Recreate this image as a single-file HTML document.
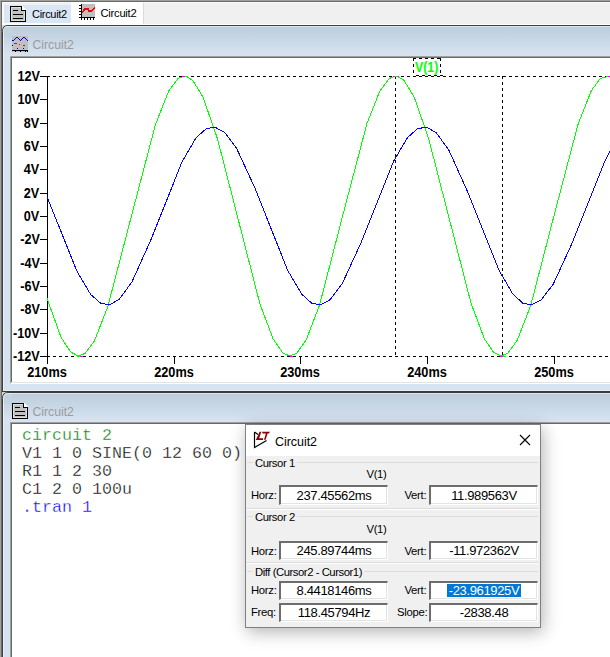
<!DOCTYPE html>
<html><head><meta charset="utf-8">
<style>
*{margin:0;padding:0;box-sizing:border-box}
html,body{width:610px;height:657px;overflow:hidden;background:#f0f0f0;font-family:"Liberation Sans",sans-serif}
.a{position:absolute}
.t{position:absolute;white-space:nowrap;line-height:1}
svg{position:absolute;left:0;top:0}
.mono{font-family:"Liberation Mono",monospace;font-size:16.67px;line-height:18px;position:absolute;white-space:pre;-webkit-text-stroke:0.35px #fff}
.yl{right:570.4px;font-weight:bold;font-size:14px;transform:scaleX(0.9);transform-origin:100% 0}
.xl{width:100px;text-align:center;font-weight:bold;font-size:14px;transform:scaleX(0.91);transform-origin:50% 0}
.dlg{font-size:12px;color:#000}
.ebox{position:absolute;background:#fff;border-top:2px solid #6d6d6d;border-left:2px solid #6d6d6d;border-bottom:1px solid #fff;border-right:1px solid #fff;text-align:center;font-size:13px;letter-spacing:-0.35px;line-height:17px;padding-top:0px}
.eb2{line-height:15px}
.lb{font-size:11.3px;color:#000;letter-spacing:-0.45px}
.sel{background:#0078d7;color:#fff;display:inline-block;line-height:13px;height:13px;padding:0 2px;vertical-align:top;margin-top:1px}
.ebox:after{content:"";position:absolute;left:0;right:0;bottom:0;height:1px;background:#e3e3e3}
.ebox:before{content:"";position:absolute;top:0;right:0;bottom:0;width:1px;background:#e3e3e3}
</style></head><body>
<!-- MDI frame edges -->
<div class="a" style="left:0;top:0;width:610px;height:1px;background:#a0a0a0"></div>
<div class="a" style="left:0;top:1px;width:610px;height:1px;background:#6a6a6a"></div>
<div class="a" style="left:0;top:0;width:1px;height:657px;background:#a0a0a0"></div>
<div class="a" style="left:1px;top:1px;width:1px;height:656px;background:#6a6a6a"></div>
<!-- tab strip -->
<div class="a" style="left:2px;top:2px;width:608px;height:1px;background:#fafafa"></div>
<div class="a" style="left:2px;top:24px;width:608px;height:1px;background:#fff"></div>
<div class="a" style="left:2px;top:3px;width:2px;height:21px;background:#f8f8f8"></div>
<div class="a" style="left:4px;top:5px;width:67px;height:18px;background:#d9e7f5"></div>
<div class="a" style="left:2px;top:23px;width:70px;height:1px;background:#fcfcfc"></div>
<div class="a" style="left:71px;top:2px;width:72px;height:22px;background:#fff"></div>
<div class="a" style="left:143px;top:3px;width:1px;height:21px;background:#dadada"></div>
<div class="t" style="left:32px;top:9px;font-size:11px;letter-spacing:-0.3px;color:#000">Circuit2</div>
<div class="t" style="left:100.5px;top:7.5px;font-size:11.2px;letter-spacing:-0.25px;color:#000">Circuit2</div>

<!-- window 1 frame -->
<div class="a" style="left:2px;top:25px;width:4px;height:4px;background:#d8d4c4"></div>
<div class="a" style="left:2px;top:392px;width:4px;height:4px;background:#d8d4c4"></div>
<div class="a" style="left:2px;top:25px;width:608px;height:367px;background:#d6e3f0;border-top:1px solid #404040;border-left:1px solid #404040;border-bottom:1px solid #3c3c3c"></div>
<div class="a" style="left:6px;top:26px;width:604px;height:1px;background:#dde6f0"></div>
<div class="a" style="left:3px;top:27px;width:607px;height:29px;background:linear-gradient(#bccddc,#d8e4f0)"></div>
<div class="a" style="left:3px;top:30px;width:1px;height:360px;background:#e8f0f8"></div>
<svg width="12" height="12" style="position:absolute;left:0;top:25px" viewBox="0 0 12 12"><rect x="2" y="0" width="6" height="6" fill="#d8d4c4"/><path d="M2,12 V6 Q2,0 8,0 H12 V12 Z" fill="#c3d2e0"/><path d="M2.5,12 V6.5 Q2.5,0.5 8,0.5 H12" fill="none" stroke="#3c3c3c" stroke-width="1"/><path d="M3.5,12 V6.5 Q3.5,1.5 8,1.5 H12" fill="none" stroke="#e4ecf4" stroke-width="1"/></svg>
<div class="a" style="left:3px;top:390px;width:607px;height:1px;background:#e6eef8"></div>
<div class="t" style="left:32.5px;top:39px;font-size:12.2px;color:#9a9aa0">Circuit2</div>
<!-- plot pane -->
<div class="a" style="left:10px;top:56px;width:600px;height:328px;background:#fff;border-top:1px solid #a0a0a0;border-left:1px solid #a0a0a0;border-bottom:1px solid #fff"></div>
<div class="a" style="left:11px;top:57px;width:599px;height:1px;background:#696969"></div>
<div class="a" style="left:11px;top:57px;width:1px;height:325px;background:#696969"></div>
<div class="a" style="left:11px;top:382px;width:599px;height:1px;background:#e3e3e3"></div>

<!-- window 2 frame -->
<div class="a" style="left:2px;top:392px;width:608px;height:265px;background:#d6e3f0;border-top:1px solid #3c3c3c;border-left:1px solid #404040"></div>
<div class="a" style="left:6px;top:393px;width:604px;height:1px;background:#dde6f0"></div>
<div class="a" style="left:3px;top:394px;width:607px;height:28px;background:linear-gradient(#bccddc,#d8e4f0)"></div>
<div class="a" style="left:3px;top:397px;width:1px;height:260px;background:#e8f0f8"></div>
<svg width="12" height="12" style="position:absolute;left:0;top:392px" viewBox="0 0 12 12"><rect x="2" y="0" width="6" height="6" fill="#d8d4c4"/><path d="M2,12 V6 Q2,0 8,0 H12 V12 Z" fill="#c3d2e0"/><path d="M2.5,12 V6.5 Q2.5,0.5 8,0.5 H12" fill="none" stroke="#3c3c3c" stroke-width="1"/><path d="M3.5,12 V6.5 Q3.5,1.5 8,1.5 H12" fill="none" stroke="#e4ecf4" stroke-width="1"/></svg>
<div class="t" style="left:32.5px;top:406px;font-size:12.2px;color:#9a9aa0">Circuit2</div>
<div class="a" style="left:10px;top:422px;width:600px;height:235px;background:#fff;border-top:1px solid #a0a0a0;border-left:1px solid #a0a0a0"></div>
<div class="a" style="left:11px;top:423px;width:599px;height:1px;background:#696969"></div>
<div class="a" style="left:11px;top:423px;width:1px;height:234px;background:#696969"></div>

<div class="mono" style="left:22px;top:427px"><span style="color:#008000">circuit 2</span>
V1 1 0 SINE(0 12 60 0)
R1 1 2 30
C1 2 0 100u
<span style="color:#0000ff">.tran 1</span></div>

<svg width="610" height="657" viewBox="0 0 610 657" shape-rendering="crispEdges">
<rect x="40" y="76" width="7" height="1" fill="#000"/><rect x="40" y="99" width="7" height="1" fill="#000"/><rect x="40" y="123" width="7" height="1" fill="#000"/><rect x="40" y="146" width="7" height="1" fill="#000"/><rect x="40" y="169" width="7" height="1" fill="#000"/><rect x="40" y="193" width="7" height="1" fill="#000"/><rect x="40" y="216" width="7" height="1" fill="#000"/><rect x="40" y="239" width="7" height="1" fill="#000"/><rect x="40" y="263" width="7" height="1" fill="#000"/><rect x="40" y="286" width="7" height="1" fill="#000"/><rect x="40" y="309" width="7" height="1" fill="#000"/><rect x="40" y="333" width="7" height="1" fill="#000"/><rect x="40" y="356" width="7" height="1" fill="#000"/><rect x="47" y="76" width="1" height="288" fill="#000"/><rect x="47" y="356" width="1" height="8" fill="#000"/><rect x="174" y="356" width="1" height="8" fill="#000"/><rect x="300" y="356" width="1" height="8" fill="#000"/><rect x="427" y="356" width="1" height="8" fill="#000"/><rect x="554" y="356" width="1" height="8" fill="#000"/><rect x="47" y="76" width="3" height="1" fill="#000"/><rect x="47" y="356" width="3" height="1" fill="#000"/><rect x="53" y="76" width="3" height="1" fill="#000"/><rect x="53" y="356" width="3" height="1" fill="#000"/><rect x="59" y="76" width="3" height="1" fill="#000"/><rect x="59" y="356" width="3" height="1" fill="#000"/><rect x="65" y="76" width="3" height="1" fill="#000"/><rect x="65" y="356" width="3" height="1" fill="#000"/><rect x="71" y="76" width="3" height="1" fill="#000"/><rect x="71" y="356" width="3" height="1" fill="#000"/><rect x="77" y="76" width="3" height="1" fill="#000"/><rect x="77" y="356" width="3" height="1" fill="#000"/><rect x="83" y="76" width="3" height="1" fill="#000"/><rect x="83" y="356" width="3" height="1" fill="#000"/><rect x="89" y="76" width="3" height="1" fill="#000"/><rect x="89" y="356" width="3" height="1" fill="#000"/><rect x="95" y="76" width="3" height="1" fill="#000"/><rect x="95" y="356" width="3" height="1" fill="#000"/><rect x="101" y="76" width="3" height="1" fill="#000"/><rect x="101" y="356" width="3" height="1" fill="#000"/><rect x="107" y="76" width="3" height="1" fill="#000"/><rect x="107" y="356" width="3" height="1" fill="#000"/><rect x="113" y="76" width="3" height="1" fill="#000"/><rect x="113" y="356" width="3" height="1" fill="#000"/><rect x="119" y="76" width="3" height="1" fill="#000"/><rect x="119" y="356" width="3" height="1" fill="#000"/><rect x="125" y="76" width="3" height="1" fill="#000"/><rect x="125" y="356" width="3" height="1" fill="#000"/><rect x="131" y="76" width="3" height="1" fill="#000"/><rect x="131" y="356" width="3" height="1" fill="#000"/><rect x="137" y="76" width="3" height="1" fill="#000"/><rect x="137" y="356" width="3" height="1" fill="#000"/><rect x="143" y="76" width="3" height="1" fill="#000"/><rect x="143" y="356" width="3" height="1" fill="#000"/><rect x="149" y="76" width="3" height="1" fill="#000"/><rect x="149" y="356" width="3" height="1" fill="#000"/><rect x="155" y="76" width="3" height="1" fill="#000"/><rect x="155" y="356" width="3" height="1" fill="#000"/><rect x="161" y="76" width="3" height="1" fill="#000"/><rect x="161" y="356" width="3" height="1" fill="#000"/><rect x="167" y="76" width="3" height="1" fill="#000"/><rect x="167" y="356" width="3" height="1" fill="#000"/><rect x="173" y="76" width="3" height="1" fill="#000"/><rect x="173" y="356" width="3" height="1" fill="#000"/><rect x="179" y="76" width="3" height="1" fill="#000"/><rect x="179" y="356" width="3" height="1" fill="#000"/><rect x="185" y="76" width="3" height="1" fill="#000"/><rect x="185" y="356" width="3" height="1" fill="#000"/><rect x="191" y="76" width="3" height="1" fill="#000"/><rect x="191" y="356" width="3" height="1" fill="#000"/><rect x="197" y="76" width="3" height="1" fill="#000"/><rect x="197" y="356" width="3" height="1" fill="#000"/><rect x="203" y="76" width="3" height="1" fill="#000"/><rect x="203" y="356" width="3" height="1" fill="#000"/><rect x="209" y="76" width="3" height="1" fill="#000"/><rect x="209" y="356" width="3" height="1" fill="#000"/><rect x="215" y="76" width="3" height="1" fill="#000"/><rect x="215" y="356" width="3" height="1" fill="#000"/><rect x="221" y="76" width="3" height="1" fill="#000"/><rect x="221" y="356" width="3" height="1" fill="#000"/><rect x="227" y="76" width="3" height="1" fill="#000"/><rect x="227" y="356" width="3" height="1" fill="#000"/><rect x="233" y="76" width="3" height="1" fill="#000"/><rect x="233" y="356" width="3" height="1" fill="#000"/><rect x="239" y="76" width="3" height="1" fill="#000"/><rect x="239" y="356" width="3" height="1" fill="#000"/><rect x="245" y="76" width="3" height="1" fill="#000"/><rect x="245" y="356" width="3" height="1" fill="#000"/><rect x="251" y="76" width="3" height="1" fill="#000"/><rect x="251" y="356" width="3" height="1" fill="#000"/><rect x="257" y="76" width="3" height="1" fill="#000"/><rect x="257" y="356" width="3" height="1" fill="#000"/><rect x="263" y="76" width="3" height="1" fill="#000"/><rect x="263" y="356" width="3" height="1" fill="#000"/><rect x="269" y="76" width="3" height="1" fill="#000"/><rect x="269" y="356" width="3" height="1" fill="#000"/><rect x="275" y="76" width="3" height="1" fill="#000"/><rect x="275" y="356" width="3" height="1" fill="#000"/><rect x="281" y="76" width="3" height="1" fill="#000"/><rect x="281" y="356" width="3" height="1" fill="#000"/><rect x="287" y="76" width="3" height="1" fill="#000"/><rect x="287" y="356" width="3" height="1" fill="#000"/><rect x="293" y="76" width="3" height="1" fill="#000"/><rect x="293" y="356" width="3" height="1" fill="#000"/><rect x="299" y="76" width="3" height="1" fill="#000"/><rect x="299" y="356" width="3" height="1" fill="#000"/><rect x="305" y="76" width="3" height="1" fill="#000"/><rect x="305" y="356" width="3" height="1" fill="#000"/><rect x="311" y="76" width="3" height="1" fill="#000"/><rect x="311" y="356" width="3" height="1" fill="#000"/><rect x="317" y="76" width="3" height="1" fill="#000"/><rect x="317" y="356" width="3" height="1" fill="#000"/><rect x="323" y="76" width="3" height="1" fill="#000"/><rect x="323" y="356" width="3" height="1" fill="#000"/><rect x="329" y="76" width="3" height="1" fill="#000"/><rect x="329" y="356" width="3" height="1" fill="#000"/><rect x="335" y="76" width="3" height="1" fill="#000"/><rect x="335" y="356" width="3" height="1" fill="#000"/><rect x="341" y="76" width="3" height="1" fill="#000"/><rect x="341" y="356" width="3" height="1" fill="#000"/><rect x="347" y="76" width="3" height="1" fill="#000"/><rect x="347" y="356" width="3" height="1" fill="#000"/><rect x="353" y="76" width="3" height="1" fill="#000"/><rect x="353" y="356" width="3" height="1" fill="#000"/><rect x="359" y="76" width="3" height="1" fill="#000"/><rect x="359" y="356" width="3" height="1" fill="#000"/><rect x="365" y="76" width="3" height="1" fill="#000"/><rect x="365" y="356" width="3" height="1" fill="#000"/><rect x="371" y="76" width="3" height="1" fill="#000"/><rect x="371" y="356" width="3" height="1" fill="#000"/><rect x="377" y="76" width="3" height="1" fill="#000"/><rect x="377" y="356" width="3" height="1" fill="#000"/><rect x="383" y="76" width="3" height="1" fill="#000"/><rect x="383" y="356" width="3" height="1" fill="#000"/><rect x="389" y="76" width="3" height="1" fill="#000"/><rect x="389" y="356" width="3" height="1" fill="#000"/><rect x="395" y="76" width="3" height="1" fill="#000"/><rect x="395" y="356" width="3" height="1" fill="#000"/><rect x="401" y="76" width="3" height="1" fill="#000"/><rect x="401" y="356" width="3" height="1" fill="#000"/><rect x="407" y="76" width="3" height="1" fill="#000"/><rect x="407" y="356" width="3" height="1" fill="#000"/><rect x="413" y="76" width="3" height="1" fill="#000"/><rect x="413" y="356" width="3" height="1" fill="#000"/><rect x="419" y="76" width="3" height="1" fill="#000"/><rect x="419" y="356" width="3" height="1" fill="#000"/><rect x="425" y="76" width="3" height="1" fill="#000"/><rect x="425" y="356" width="3" height="1" fill="#000"/><rect x="431" y="76" width="3" height="1" fill="#000"/><rect x="431" y="356" width="3" height="1" fill="#000"/><rect x="437" y="76" width="3" height="1" fill="#000"/><rect x="437" y="356" width="3" height="1" fill="#000"/><rect x="443" y="76" width="3" height="1" fill="#000"/><rect x="443" y="356" width="3" height="1" fill="#000"/><rect x="449" y="76" width="3" height="1" fill="#000"/><rect x="449" y="356" width="3" height="1" fill="#000"/><rect x="455" y="76" width="3" height="1" fill="#000"/><rect x="455" y="356" width="3" height="1" fill="#000"/><rect x="461" y="76" width="3" height="1" fill="#000"/><rect x="461" y="356" width="3" height="1" fill="#000"/><rect x="467" y="76" width="3" height="1" fill="#000"/><rect x="467" y="356" width="3" height="1" fill="#000"/><rect x="473" y="76" width="3" height="1" fill="#000"/><rect x="473" y="356" width="3" height="1" fill="#000"/><rect x="479" y="76" width="3" height="1" fill="#000"/><rect x="479" y="356" width="3" height="1" fill="#000"/><rect x="485" y="76" width="3" height="1" fill="#000"/><rect x="485" y="356" width="3" height="1" fill="#000"/><rect x="491" y="76" width="3" height="1" fill="#000"/><rect x="491" y="356" width="3" height="1" fill="#000"/><rect x="497" y="76" width="3" height="1" fill="#000"/><rect x="497" y="356" width="3" height="1" fill="#000"/><rect x="503" y="76" width="3" height="1" fill="#000"/><rect x="503" y="356" width="3" height="1" fill="#000"/><rect x="509" y="76" width="3" height="1" fill="#000"/><rect x="509" y="356" width="3" height="1" fill="#000"/><rect x="515" y="76" width="3" height="1" fill="#000"/><rect x="515" y="356" width="3" height="1" fill="#000"/><rect x="521" y="76" width="3" height="1" fill="#000"/><rect x="521" y="356" width="3" height="1" fill="#000"/><rect x="527" y="76" width="3" height="1" fill="#000"/><rect x="527" y="356" width="3" height="1" fill="#000"/><rect x="533" y="76" width="3" height="1" fill="#000"/><rect x="533" y="356" width="3" height="1" fill="#000"/><rect x="539" y="76" width="3" height="1" fill="#000"/><rect x="539" y="356" width="3" height="1" fill="#000"/><rect x="545" y="76" width="3" height="1" fill="#000"/><rect x="545" y="356" width="3" height="1" fill="#000"/><rect x="551" y="76" width="3" height="1" fill="#000"/><rect x="551" y="356" width="3" height="1" fill="#000"/><rect x="557" y="76" width="3" height="1" fill="#000"/><rect x="557" y="356" width="3" height="1" fill="#000"/><rect x="563" y="76" width="3" height="1" fill="#000"/><rect x="563" y="356" width="3" height="1" fill="#000"/><rect x="569" y="76" width="3" height="1" fill="#000"/><rect x="569" y="356" width="3" height="1" fill="#000"/><rect x="575" y="76" width="3" height="1" fill="#000"/><rect x="575" y="356" width="3" height="1" fill="#000"/><rect x="581" y="76" width="3" height="1" fill="#000"/><rect x="581" y="356" width="3" height="1" fill="#000"/><rect x="587" y="76" width="3" height="1" fill="#000"/><rect x="587" y="356" width="3" height="1" fill="#000"/><rect x="593" y="76" width="3" height="1" fill="#000"/><rect x="593" y="356" width="3" height="1" fill="#000"/><rect x="599" y="76" width="3" height="1" fill="#000"/><rect x="599" y="356" width="3" height="1" fill="#000"/><rect x="605" y="76" width="3" height="1" fill="#000"/><rect x="605" y="356" width="3" height="1" fill="#000"/><rect x="395" y="76" width="1" height="3" fill="#000"/><rect x="395" y="82" width="1" height="3" fill="#000"/><rect x="395" y="88" width="1" height="3" fill="#000"/><rect x="395" y="94" width="1" height="3" fill="#000"/><rect x="395" y="100" width="1" height="3" fill="#000"/><rect x="395" y="106" width="1" height="3" fill="#000"/><rect x="395" y="112" width="1" height="3" fill="#000"/><rect x="395" y="118" width="1" height="3" fill="#000"/><rect x="395" y="124" width="1" height="3" fill="#000"/><rect x="395" y="130" width="1" height="3" fill="#000"/><rect x="395" y="136" width="1" height="3" fill="#000"/><rect x="395" y="142" width="1" height="3" fill="#000"/><rect x="395" y="148" width="1" height="3" fill="#000"/><rect x="395" y="154" width="1" height="3" fill="#000"/><rect x="395" y="160" width="1" height="3" fill="#000"/><rect x="395" y="166" width="1" height="3" fill="#000"/><rect x="395" y="172" width="1" height="3" fill="#000"/><rect x="395" y="178" width="1" height="3" fill="#000"/><rect x="395" y="184" width="1" height="3" fill="#000"/><rect x="395" y="190" width="1" height="3" fill="#000"/><rect x="395" y="196" width="1" height="3" fill="#000"/><rect x="395" y="202" width="1" height="3" fill="#000"/><rect x="395" y="208" width="1" height="3" fill="#000"/><rect x="395" y="214" width="1" height="3" fill="#000"/><rect x="395" y="220" width="1" height="3" fill="#000"/><rect x="395" y="226" width="1" height="3" fill="#000"/><rect x="395" y="232" width="1" height="3" fill="#000"/><rect x="395" y="238" width="1" height="3" fill="#000"/><rect x="395" y="244" width="1" height="3" fill="#000"/><rect x="395" y="250" width="1" height="3" fill="#000"/><rect x="395" y="256" width="1" height="3" fill="#000"/><rect x="395" y="262" width="1" height="3" fill="#000"/><rect x="395" y="268" width="1" height="3" fill="#000"/><rect x="395" y="274" width="1" height="3" fill="#000"/><rect x="395" y="280" width="1" height="3" fill="#000"/><rect x="395" y="286" width="1" height="3" fill="#000"/><rect x="395" y="292" width="1" height="3" fill="#000"/><rect x="395" y="298" width="1" height="3" fill="#000"/><rect x="395" y="304" width="1" height="3" fill="#000"/><rect x="395" y="310" width="1" height="3" fill="#000"/><rect x="395" y="316" width="1" height="3" fill="#000"/><rect x="395" y="322" width="1" height="3" fill="#000"/><rect x="395" y="328" width="1" height="3" fill="#000"/><rect x="395" y="334" width="1" height="3" fill="#000"/><rect x="395" y="340" width="1" height="3" fill="#000"/><rect x="395" y="346" width="1" height="3" fill="#000"/><rect x="395" y="352" width="1" height="3" fill="#000"/><rect x="502" y="76" width="1" height="3" fill="#000"/><rect x="502" y="82" width="1" height="3" fill="#000"/><rect x="502" y="88" width="1" height="3" fill="#000"/><rect x="502" y="94" width="1" height="3" fill="#000"/><rect x="502" y="100" width="1" height="3" fill="#000"/><rect x="502" y="106" width="1" height="3" fill="#000"/><rect x="502" y="112" width="1" height="3" fill="#000"/><rect x="502" y="118" width="1" height="3" fill="#000"/><rect x="502" y="124" width="1" height="3" fill="#000"/><rect x="502" y="130" width="1" height="3" fill="#000"/><rect x="502" y="136" width="1" height="3" fill="#000"/><rect x="502" y="142" width="1" height="3" fill="#000"/><rect x="502" y="148" width="1" height="3" fill="#000"/><rect x="502" y="154" width="1" height="3" fill="#000"/><rect x="502" y="160" width="1" height="3" fill="#000"/><rect x="502" y="166" width="1" height="3" fill="#000"/><rect x="502" y="172" width="1" height="3" fill="#000"/><rect x="502" y="178" width="1" height="3" fill="#000"/><rect x="502" y="184" width="1" height="3" fill="#000"/><rect x="502" y="190" width="1" height="3" fill="#000"/><rect x="502" y="196" width="1" height="3" fill="#000"/><rect x="502" y="202" width="1" height="3" fill="#000"/><rect x="502" y="208" width="1" height="3" fill="#000"/><rect x="502" y="214" width="1" height="3" fill="#000"/><rect x="502" y="220" width="1" height="3" fill="#000"/><rect x="502" y="226" width="1" height="3" fill="#000"/><rect x="502" y="232" width="1" height="3" fill="#000"/><rect x="502" y="238" width="1" height="3" fill="#000"/><rect x="502" y="244" width="1" height="3" fill="#000"/><rect x="502" y="250" width="1" height="3" fill="#000"/><rect x="502" y="256" width="1" height="3" fill="#000"/><rect x="502" y="262" width="1" height="3" fill="#000"/><rect x="502" y="268" width="1" height="3" fill="#000"/><rect x="502" y="274" width="1" height="3" fill="#000"/><rect x="502" y="280" width="1" height="3" fill="#000"/><rect x="502" y="286" width="1" height="3" fill="#000"/><rect x="502" y="292" width="1" height="3" fill="#000"/><rect x="502" y="298" width="1" height="3" fill="#000"/><rect x="502" y="304" width="1" height="3" fill="#000"/><rect x="502" y="310" width="1" height="3" fill="#000"/><rect x="502" y="316" width="1" height="3" fill="#000"/><rect x="502" y="322" width="1" height="3" fill="#000"/><rect x="502" y="328" width="1" height="3" fill="#000"/><rect x="502" y="334" width="1" height="3" fill="#000"/><rect x="502" y="340" width="1" height="3" fill="#000"/><rect x="502" y="346" width="1" height="3" fill="#000"/><rect x="502" y="352" width="1" height="3" fill="#000"/><rect x="413" y="58" width="3" height="1" fill="#000"/><rect x="416" y="75" width="3" height="1" fill="#000"/><rect x="419" y="58" width="3" height="1" fill="#000"/><rect x="422" y="75" width="3" height="1" fill="#000"/><rect x="425" y="58" width="3" height="1" fill="#000"/><rect x="428" y="75" width="3" height="1" fill="#000"/><rect x="431" y="58" width="3" height="1" fill="#000"/><rect x="434" y="75" width="3" height="1" fill="#000"/><rect x="437" y="58" width="3" height="1" fill="#000"/><rect x="440" y="75" width="3" height="1" fill="#000"/><rect x="440" y="58" width="1" height="1" fill="#000"/><rect x="413" y="58" width="1" height="3" fill="#000"/><rect x="440" y="58" width="1" height="3" fill="#000"/><rect x="413" y="64" width="1" height="3" fill="#000"/><rect x="440" y="64" width="1" height="3" fill="#000"/><rect x="413" y="70" width="1" height="3" fill="#000"/><rect x="440" y="70" width="1" height="3" fill="#000"/>
<polyline points="47.0,298.3 60.9,336.9 70.4,351.8 78.1,356.0 85.0,353.5 94.5,340.7 107.8,306.6 132.6,211.6 155.4,124.7 168.7,90.9 178.2,78.3 185.2,76.0 192.8,80.4 202.9,96.9 217.5,138.8 259.9,303.9 273.2,339.1 282.8,352.8 289.7,356.0 296.7,353.2 306.2,339.9 319.5,305.2 344.9,207.2 367.0,123.4 379.7,91.3 389.2,78.5 396.2,76.0 403.8,80.2 413.9,96.4 428.5,138.0 471.0,303.2 484.3,338.7 493.8,352.6 500.8,356.0 507.7,353.4 517.2,340.3 530.6,305.9 555.3,210.7 578.1,124.1 591.4,90.5 600.3,78.6 607.2,76.0 611.7,77.5" fill="none" stroke="#00ff00" stroke-width="1"/>
<polyline points="47.0,196.6 76.8,271.0 90.7,294.5 100.9,303.4 109.7,304.8 119.2,299.4 131.9,282.0 150.9,239.8 182.0,161.9 195.9,138.0 206.1,128.8 214.9,127.2 224.5,132.2 236.5,148.1 254.9,188.0 287.8,270.6 301.8,294.3 311.9,303.3 320.8,304.8 330.3,299.6 342.3,283.5 360.7,243.5 393.7,161.0 407.6,137.5 417.7,128.6 426.6,127.2 436.1,132.6 448.8,150.0 467.8,192.2 498.9,270.1 512.8,294.0 522.9,303.2 531.8,304.8 541.3,299.8 553.4,283.9 571.7,244.0 604.7,161.4 611.7,148.1" fill="none" stroke="#0000ff" stroke-width="1"/>
<rect x="182" y="76" width="3" height="1" fill="#f0f"/><rect x="185" y="76" width="3" height="1" fill="#0f0"/>
<rect x="393" y="76" width="2" height="1" fill="#f0f"/><rect x="395" y="76" width="3" height="1" fill="#0f0"/><rect x="398" y="76" width="1" height="1" fill="#f0f"/>
<rect x="77" y="356" width="3" height="1" fill="#0f0"/><rect x="80" y="356" width="3" height="1" fill="#f0f"/>
<rect x="287" y="356" width="3" height="1" fill="#000"/><rect x="290" y="356" width="3" height="1" fill="#f0f"/>
<rect x="500" y="356" width="3" height="1" fill="#f0f"/>
<rect x="602" y="76" width="3" height="1" fill="#fff"/><rect x="603" y="77" width="3" height="1" fill="#0f0"/><rect x="605" y="76" width="1" height="1" fill="#000"/><rect x="606" y="76" width="2" height="1" fill="#0f0"/><rect x="608" y="76" width="2" height="1" fill="#f0f"/><rect x="606" y="77" width="4" height="1" fill="#fff"/><rect x="503" y="356" width="3" height="1" fill="#0f0"/>
<!-- icons -->
<!-- window1 plot icon at 12,36 -->
<g transform="translate(12,36)">
<rect x="0" y="0" width="16" height="16" fill="#c0c0c0"/>
<rect x="0" y="4" width="1" height="1" fill="#000"/>
<rect x="1" y="4" width="1" height="1" fill="#00f"/><rect x="2" y="3" width="1" height="1" fill="#00f"/><rect x="3" y="2" width="1" height="1" fill="#00f"/><rect x="4" y="1" width="2" height="1" fill="#00f"/><rect x="6" y="2" width="1" height="1" fill="#00f"/><rect x="7" y="3" width="1" height="1" fill="#00f"/><rect x="8" y="4" width="1" height="1" fill="#00f"/><rect x="9" y="3" width="1" height="1" fill="#00f"/><rect x="10" y="2" width="1" height="1" fill="#00f"/><rect x="11" y="1" width="2" height="1" fill="#00f"/><rect x="13" y="2" width="1" height="1" fill="#00f"/><rect x="14" y="3" width="1" height="1" fill="#00f"/><rect x="15" y="4" width="1" height="1" fill="#00f"/>
<rect x="2" y="7" width="3" height="1" fill="#f00"/><rect x="7" y="8" width="1" height="1" fill="#f00"/><rect x="11" y="9" width="2" height="1" fill="#f00"/>
<rect x="0" y="9" width="1" height="1" fill="#000"/>
<rect x="5" y="12" width="1" height="1" fill="#00a"/><rect x="11" y="12" width="1" height="1" fill="#00a"/>
<rect x="0" y="14" width="16" height="1" fill="#000"/>
<rect x="3" y="15" width="1" height="1" fill="#000"/><rect x="8" y="15" width="1" height="1" fill="#000"/><rect x="13" y="15" width="1" height="1" fill="#000"/><rect x="15" y="15" width="1" height="1" fill="#000"/>
</g>
<!-- doc icons -->
<rect x="10" y="6" width="12" height="1" fill="#000"/><rect x="22" y="6" width="1" height="1" fill="#fff"/><rect x="10" y="7" width="1" height="1" fill="#000"/><rect x="11" y="7" width="10" height="1" fill="#dcdcdc"/><rect x="21" y="7" width="1" height="1" fill="#000"/><rect x="22" y="7" width="2" height="1" fill="#fff"/><rect x="10" y="8" width="1" height="1" fill="#000"/><rect x="11" y="8" width="1" height="1" fill="#dcdcdc"/><rect x="12" y="8" width="9" height="1" fill="#c0c0c0"/><rect x="21" y="8" width="1" height="1" fill="#000"/><rect x="22" y="8" width="3" height="1" fill="#fff"/><rect x="10" y="9" width="1" height="1" fill="#000"/><rect x="11" y="9" width="1" height="1" fill="#dcdcdc"/><rect x="12" y="9" width="9" height="1" fill="#c0c0c0"/><rect x="21" y="9" width="1" height="1" fill="#000"/><rect x="22" y="9" width="4" height="1" fill="#fff"/><rect x="10" y="10" width="1" height="1" fill="#000"/><rect x="11" y="10" width="1" height="1" fill="#dcdcdc"/><rect x="12" y="10" width="1" height="1" fill="#c0c0c0"/><rect x="13" y="10" width="5" height="1" fill="#000"/><rect x="18" y="10" width="3" height="1" fill="#c0c0c0"/><rect x="21" y="10" width="5" height="1" fill="#000"/><rect x="10" y="11" width="1" height="1" fill="#000"/><rect x="11" y="11" width="1" height="1" fill="#dcdcdc"/><rect x="12" y="11" width="12" height="1" fill="#c0c0c0"/><rect x="24" y="11" width="1" height="1" fill="#dcdcdc"/><rect x="25" y="11" width="1" height="1" fill="#000"/><rect x="10" y="12" width="1" height="1" fill="#000"/><rect x="11" y="12" width="1" height="1" fill="#dcdcdc"/><rect x="12" y="12" width="12" height="1" fill="#c0c0c0"/><rect x="24" y="12" width="1" height="1" fill="#dcdcdc"/><rect x="25" y="12" width="1" height="1" fill="#000"/><rect x="10" y="13" width="1" height="1" fill="#000"/><rect x="11" y="13" width="1" height="1" fill="#dcdcdc"/><rect x="12" y="13" width="12" height="1" fill="#c0c0c0"/><rect x="24" y="13" width="1" height="1" fill="#dcdcdc"/><rect x="25" y="13" width="1" height="1" fill="#000"/><rect x="10" y="14" width="1" height="1" fill="#000"/><rect x="11" y="14" width="1" height="1" fill="#dcdcdc"/><rect x="12" y="14" width="1" height="1" fill="#c0c0c0"/><rect x="13" y="14" width="10" height="1" fill="#000"/><rect x="23" y="14" width="1" height="1" fill="#c0c0c0"/><rect x="24" y="14" width="1" height="1" fill="#dcdcdc"/><rect x="25" y="14" width="1" height="1" fill="#000"/><rect x="10" y="15" width="1" height="1" fill="#000"/><rect x="11" y="15" width="1" height="1" fill="#dcdcdc"/><rect x="12" y="15" width="12" height="1" fill="#c0c0c0"/><rect x="24" y="15" width="1" height="1" fill="#dcdcdc"/><rect x="25" y="15" width="1" height="1" fill="#000"/><rect x="10" y="16" width="1" height="1" fill="#000"/><rect x="11" y="16" width="1" height="1" fill="#dcdcdc"/><rect x="12" y="16" width="12" height="1" fill="#c0c0c0"/><rect x="24" y="16" width="1" height="1" fill="#dcdcdc"/><rect x="25" y="16" width="1" height="1" fill="#000"/><rect x="10" y="17" width="1" height="1" fill="#000"/><rect x="11" y="17" width="1" height="1" fill="#dcdcdc"/><rect x="12" y="17" width="12" height="1" fill="#c0c0c0"/><rect x="24" y="17" width="1" height="1" fill="#dcdcdc"/><rect x="25" y="17" width="1" height="1" fill="#000"/><rect x="10" y="18" width="1" height="1" fill="#000"/><rect x="11" y="18" width="1" height="1" fill="#dcdcdc"/><rect x="12" y="18" width="1" height="1" fill="#c0c0c0"/><rect x="13" y="18" width="10" height="1" fill="#000"/><rect x="23" y="18" width="1" height="1" fill="#c0c0c0"/><rect x="24" y="18" width="1" height="1" fill="#dcdcdc"/><rect x="25" y="18" width="1" height="1" fill="#000"/><rect x="10" y="19" width="1" height="1" fill="#000"/><rect x="11" y="19" width="1" height="1" fill="#dcdcdc"/><rect x="12" y="19" width="12" height="1" fill="#c0c0c0"/><rect x="24" y="19" width="1" height="1" fill="#dcdcdc"/><rect x="25" y="19" width="1" height="1" fill="#000"/><rect x="10" y="20" width="1" height="1" fill="#000"/><rect x="11" y="20" width="14" height="1" fill="#dcdcdc"/><rect x="25" y="20" width="1" height="1" fill="#000"/><rect x="10" y="21" width="16" height="1" fill="#000"/>
<rect x="12" y="403" width="12" height="1" fill="#000"/><rect x="24" y="403" width="1" height="1" fill="#fff"/><rect x="12" y="404" width="1" height="1" fill="#000"/><rect x="13" y="404" width="10" height="1" fill="#dcdcdc"/><rect x="23" y="404" width="1" height="1" fill="#000"/><rect x="24" y="404" width="2" height="1" fill="#fff"/><rect x="12" y="405" width="1" height="1" fill="#000"/><rect x="13" y="405" width="1" height="1" fill="#dcdcdc"/><rect x="14" y="405" width="9" height="1" fill="#c0c0c0"/><rect x="23" y="405" width="1" height="1" fill="#000"/><rect x="24" y="405" width="3" height="1" fill="#fff"/><rect x="12" y="406" width="1" height="1" fill="#000"/><rect x="13" y="406" width="1" height="1" fill="#dcdcdc"/><rect x="14" y="406" width="9" height="1" fill="#c0c0c0"/><rect x="23" y="406" width="1" height="1" fill="#000"/><rect x="24" y="406" width="4" height="1" fill="#fff"/><rect x="12" y="407" width="1" height="1" fill="#000"/><rect x="13" y="407" width="1" height="1" fill="#dcdcdc"/><rect x="14" y="407" width="1" height="1" fill="#c0c0c0"/><rect x="15" y="407" width="5" height="1" fill="#000"/><rect x="20" y="407" width="3" height="1" fill="#c0c0c0"/><rect x="23" y="407" width="5" height="1" fill="#000"/><rect x="12" y="408" width="1" height="1" fill="#000"/><rect x="13" y="408" width="1" height="1" fill="#dcdcdc"/><rect x="14" y="408" width="12" height="1" fill="#c0c0c0"/><rect x="26" y="408" width="1" height="1" fill="#dcdcdc"/><rect x="27" y="408" width="1" height="1" fill="#000"/><rect x="12" y="409" width="1" height="1" fill="#000"/><rect x="13" y="409" width="1" height="1" fill="#dcdcdc"/><rect x="14" y="409" width="12" height="1" fill="#c0c0c0"/><rect x="26" y="409" width="1" height="1" fill="#dcdcdc"/><rect x="27" y="409" width="1" height="1" fill="#000"/><rect x="12" y="410" width="1" height="1" fill="#000"/><rect x="13" y="410" width="1" height="1" fill="#dcdcdc"/><rect x="14" y="410" width="12" height="1" fill="#c0c0c0"/><rect x="26" y="410" width="1" height="1" fill="#dcdcdc"/><rect x="27" y="410" width="1" height="1" fill="#000"/><rect x="12" y="411" width="1" height="1" fill="#000"/><rect x="13" y="411" width="1" height="1" fill="#dcdcdc"/><rect x="14" y="411" width="1" height="1" fill="#c0c0c0"/><rect x="15" y="411" width="10" height="1" fill="#000"/><rect x="25" y="411" width="1" height="1" fill="#c0c0c0"/><rect x="26" y="411" width="1" height="1" fill="#dcdcdc"/><rect x="27" y="411" width="1" height="1" fill="#000"/><rect x="12" y="412" width="1" height="1" fill="#000"/><rect x="13" y="412" width="1" height="1" fill="#dcdcdc"/><rect x="14" y="412" width="12" height="1" fill="#c0c0c0"/><rect x="26" y="412" width="1" height="1" fill="#dcdcdc"/><rect x="27" y="412" width="1" height="1" fill="#000"/><rect x="12" y="413" width="1" height="1" fill="#000"/><rect x="13" y="413" width="1" height="1" fill="#dcdcdc"/><rect x="14" y="413" width="12" height="1" fill="#c0c0c0"/><rect x="26" y="413" width="1" height="1" fill="#dcdcdc"/><rect x="27" y="413" width="1" height="1" fill="#000"/><rect x="12" y="414" width="1" height="1" fill="#000"/><rect x="13" y="414" width="1" height="1" fill="#dcdcdc"/><rect x="14" y="414" width="12" height="1" fill="#c0c0c0"/><rect x="26" y="414" width="1" height="1" fill="#dcdcdc"/><rect x="27" y="414" width="1" height="1" fill="#000"/><rect x="12" y="415" width="1" height="1" fill="#000"/><rect x="13" y="415" width="1" height="1" fill="#dcdcdc"/><rect x="14" y="415" width="1" height="1" fill="#c0c0c0"/><rect x="15" y="415" width="10" height="1" fill="#000"/><rect x="25" y="415" width="1" height="1" fill="#c0c0c0"/><rect x="26" y="415" width="1" height="1" fill="#dcdcdc"/><rect x="27" y="415" width="1" height="1" fill="#000"/><rect x="12" y="416" width="1" height="1" fill="#000"/><rect x="13" y="416" width="1" height="1" fill="#dcdcdc"/><rect x="14" y="416" width="12" height="1" fill="#c0c0c0"/><rect x="26" y="416" width="1" height="1" fill="#dcdcdc"/><rect x="27" y="416" width="1" height="1" fill="#000"/><rect x="12" y="417" width="1" height="1" fill="#000"/><rect x="13" y="417" width="14" height="1" fill="#dcdcdc"/><rect x="27" y="417" width="1" height="1" fill="#000"/><rect x="12" y="418" width="16" height="1" fill="#000"/>
<!-- graph icon tab2 at 79,4 -->
<g transform="translate(79,4)">
<rect x="3" y="0" width="13" height="13" fill="#c0c0c0"/>
<rect x="2" y="0" width="1" height="16" fill="#000"/>
<rect x="0" y="1" width="2" height="1" fill="#000"/><rect x="0" y="4" width="2" height="1" fill="#000"/><rect x="0" y="7" width="2" height="1" fill="#000"/><rect x="0" y="10" width="2" height="1" fill="#000"/>
<rect x="0" y="13" width="16" height="1" fill="#000"/>
<rect x="5" y="14" width="1" height="2" fill="#000"/><rect x="8" y="14" width="1" height="2" fill="#000"/><rect x="11" y="14" width="1" height="2" fill="#000"/><rect x="14" y="14" width="1" height="2" fill="#000"/>
<polyline points="3,8.6 6.4,4.8 8.5,4.8 10.3,7.1 12.5,7.1 15.8,3.6" fill="none" stroke="#f00" stroke-width="2"/>
</g>
</svg>

<!-- V(1) label -->

<div class="t" style="left:415px;top:59.5px;font-size:14px;font-weight:bold;color:#00ff00;transform:scaleX(0.88);transform-origin:0 0">V(1)</div>
<!-- y labels -->
<div class="t yl" style="top:69.1px">12V</div>
<div class="t yl" style="top:92.1px">10V</div>
<div class="t yl" style="top:116.1px">8V</div>
<div class="t yl" style="top:139.1px">6V</div>
<div class="t yl" style="top:162.1px">4V</div>
<div class="t yl" style="top:186.1px">2V</div>
<div class="t yl" style="top:209.1px">0V</div>
<div class="t yl" style="top:232.1px">-2V</div>
<div class="t yl" style="top:256.1px">-4V</div>
<div class="t yl" style="top:279.1px">-6V</div>
<div class="t yl" style="top:302.1px">-8V</div>
<div class="t yl" style="top:326.1px">-10V</div>
<div class="t yl" style="top:349.1px">-12V</div>
<div class="t xl" style="left:-3px;top:365.2px">210ms</div>
<div class="t xl" style="left:124px;top:365.2px">220ms</div>
<div class="t xl" style="left:250px;top:365.2px">230ms</div>
<div class="t xl" style="left:377px;top:365.2px">240ms</div>
<div class="t xl" style="left:504px;top:365.2px">250ms</div>

<!-- dialog -->
<div class="a" style="left:245px;top:424px;width:296px;height:204px;background:#f0f0f0;border:1px solid #808080;box-shadow:2px 4px 16px rgba(0,0,0,0.3)"></div>
<div class="a" style="left:246px;top:425px;width:294px;height:31px;background:#fff"></div>
<svg width="610" height="657" viewBox="0 0 610 657" style="position:absolute;left:0;top:0">
<g>
<path d="M254.5,432 V447.5 L266.5,440.5" fill="none" stroke="#000" stroke-width="1.2"/>
<path d="M254.5,432 L258,434.5" fill="none" stroke="#000" stroke-width="1.2"/>
<path d="M255.8,440 L259.6,431.8 L261.3,431.8 L259.2,438.2 L263.2,438.2 L263,440 Z" fill="#8b0000"/>
<path d="M262,431.8 H270 L268.8,433.4 H267.6 L265.6,439.8 H264 L265.9,433.4 H262.6 Z" fill="#8b0000"/>
</g>
<path d="M520,435 L530,445 M530,435 L520,445" stroke="#000" stroke-width="1.1" fill="none"/>
</svg>
<div class="t" style="left:275px;top:435.5px;font-size:12.5px;letter-spacing:-0.05px">Circuit2</div>

<!-- groups -->
<div class="a" style="left:247px;top:462px;width:291px;height:1px;background:#dcdcdc"></div>
<div class="a" style="left:246px;top:508px;width:293px;height:1px;background:#dcdcdc"></div>
<div class="a" style="left:246px;top:509px;width:293px;height:1px;background:#fff"></div>
<div class="a" style="left:247px;top:516px;width:291px;height:1px;background:#dcdcdc"></div>
<div class="a" style="left:246px;top:562px;width:293px;height:1px;background:#dcdcdc"></div>
<div class="a" style="left:246px;top:563px;width:293px;height:1px;background:#fff"></div>
<div class="a" style="left:247px;top:571px;width:291px;height:1px;background:#dcdcdc"></div>

<div class="t lb" style="left:253px;top:457.5px;padding:0 2px;background:#f0f0f0">Cursor 1</div>
<div class="t lb" style="left:253px;top:511.5px;padding:0 2px;background:#f0f0f0">Cursor 2</div>
<div class="t lb" style="left:253px;top:566.5px;padding:0 2px;background:#f0f0f0;letter-spacing:-0.45px">Diff (Cursor2 - Cursor1)</div>

<div class="t lb" style="left:366.5px;top:469px;letter-spacing:-0.4px">V(1)</div>
<div class="t lb" style="left:366.5px;top:524px;letter-spacing:-0.4px">V(1)</div>

<div class="t lb" style="left:251px;top:489.5px;letter-spacing:-0.3px">Horz:</div>
<div class="t lb" style="left:404.5px;top:489.5px;letter-spacing:-0.3px">Vert:</div>
<div class="t lb" style="left:251px;top:545.5px;letter-spacing:-0.3px">Horz:</div>
<div class="t lb" style="left:404.5px;top:545.5px;letter-spacing:-0.3px">Vert:</div>
<div class="t lb" style="left:251px;top:584.5px;letter-spacing:-0.3px">Horz:</div>
<div class="t lb" style="left:404.5px;top:584.5px;letter-spacing:-0.3px">Vert:</div>
<div class="t lb" style="left:251px;top:606.5px;letter-spacing:-0.3px">Freq:</div>
<div class="t lb" style="left:397px;top:606.5px;letter-spacing:-0.3px">Slope:</div>

<div class="ebox" style="left:279px;top:485px;width:109px;height:20px">237.45562ms</div>
<div class="ebox" style="left:429px;top:485px;width:109px;height:20px">11.989563V</div>
<div class="ebox" style="left:279px;top:541px;width:109px;height:19px;line-height:16px">245.89744ms</div>
<div class="ebox" style="left:429px;top:541px;width:109px;height:19px;line-height:16px">-11.972362V</div>
<div class="ebox" style="left:279px;top:581px;width:109px;height:19px;line-height:15px">8.4418146ms</div>
<div class="ebox" style="left:429px;top:581px;width:109px;height:19px;line-height:15px"><span class="sel">-23.961925V</span></div>
<div class="ebox" style="left:279px;top:603px;width:109px;height:19px;line-height:15px">118.45794Hz</div>
<div class="ebox" style="left:429px;top:603px;width:109px;height:19px;line-height:15px">-2838.48</div>
</body></html>
